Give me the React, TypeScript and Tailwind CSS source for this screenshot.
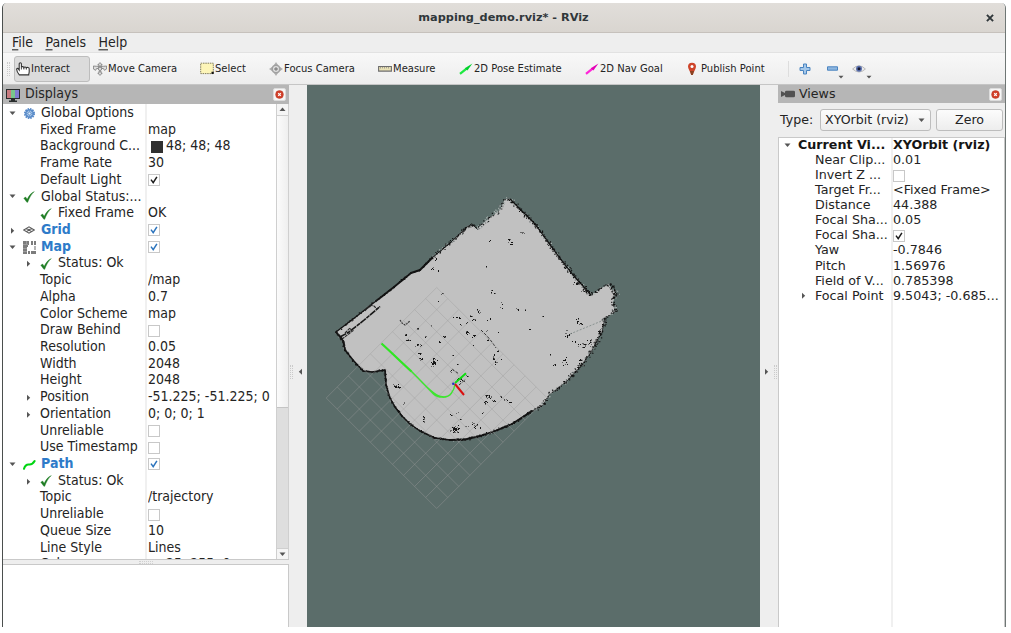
import React from "react";

type Pt = [number, number];

/* ---------- small glyphs ---------- */

const Tri = ({ dir }: { dir: "down" | "right" | "left" | "up" }) => {
  const d = {
    down: "M0.5 1.5h6l-3 3.6z",
    up: "M0.5 5h6l-3-3.6z",
    right: "M2 0.8v6l3.2-3z",
    left: "M5 0.8v6L1.8 3.8z",
  }[dir];
  return (
    <svg className="h-[7px] w-[7px] shrink-0" viewBox="0 0 7 7">
      <path d={d} fill="#555" />
    </svg>
  );
};

const GreenCheck = () => (
  <svg className="h-3 w-3 shrink-0" viewBox="0 0 12 12">
    <path d="M0.8 7.2L2.6 6l1.6 2.3C5.8 4.8 8 2 11.3.6 8.4 3.2 6.4 6.600 4.700 11.300H3.900z" fill="#1f7d24" stroke="#1f7d24" strokeWidth=".4" />
  </svg>
);

const Gear = () => (
  <svg className="h-[13px] w-[13px] shrink-0" viewBox="0 0 13 13">
    <circle cx="6.500" cy="6.500" r="4.600" fill="#7ba4d6" stroke="#5b8cca" strokeWidth="1.900" strokeDasharray="1.500 .9" />
    <circle cx="6.500" cy="6.500" r="3.600" fill="#a3c1e5" stroke="#4a80c2" strokeWidth=".8" />
    <path d="M6.500 3v7M3 6.500h7M4 4l5 5M9 4l-5 5" stroke="#4e84c4" strokeWidth=".6" />
    <circle cx="6.500" cy="6.500" r="1.100" fill="#e6effa" />
  </svg>
);

const GridIcon = () => (
  <svg className="h-[12px] w-[12px] shrink-0" viewBox="0 0 12 12">
    <path d="M.8 6L6 2.900 11.200 6 6 9.100zM3.400 4.300l5.200 3.400M8.600 4.300L3.400 7.700" fill="none" stroke="#5c5c5c" strokeWidth="1.100" />
  </svg>
);

const MapIcon = () => (
  <svg className="h-[13px] w-[13px] shrink-0" viewBox="0 0 13 13" shapeRendering="crispEdges">
    <path d="M0 0h6v4H5v2H4v7H0z" fill="#7c7c7c" />
    <path d="M0 3.500h5M3.500 0v4M0 7.500h4M0 10.500h4" stroke="#9b9b9b" strokeWidth="1" />
    <path d="M8 0h2v4H8zM11 0h2v4h-2zM5 10h2v3H5zM8 10h5v3H8z" fill="#7c7c7c" />
    <path d="M11 5h2v4h-2z" fill="#b4b4b4" />
  </svg>
);

const PathIcon = () => (
  <svg className="h-[13px] w-[13px] shrink-0" viewBox="0 0 13 13">
    <path d="M1 10.800C2 7.500 4 6.300 6 6.500s4-.6 5.600-3.400" fill="none" stroke="#00d512" strokeWidth="2.100" strokeLinecap="round" />
  </svg>
);

const CloseBtn = () => (
  <span className="flex h-[13px] w-[13px] items-center justify-center rounded-[2px] border border-[#dcdcdc] bg-[#f6f6f6]">
    <svg className="h-[9px] w-[9px] shrink-0" viewBox="0 0 9 9">
      <circle cx="4.500" cy="4.500" r="3.900" fill="#d2402a" stroke="#b83a28" strokeWidth=".5" />
      <path d="M3.200 3.200l2.600 2.600M5.800 3.200L3.200 5.800" stroke="#fff" strokeWidth="1.200" />
    </svg>
  </span>
);

const Box = ({ on, blue }: { on?: boolean; blue?: boolean }) => (
  <span className="flex h-3 w-3 shrink-0 items-center justify-center border border-[#c8c8c8] bg-white">
    {on && (
      <svg className="h-2 w-2" viewBox="0 0 8 8">
        <path d="M1 3.600l2.200 3L6.900.8" fill="none" stroke={blue ? "#2c74bd" : "#1c1c1c"} strokeWidth="1.500" />
      </svg>
    )}
  </span>
);

/* ---------- property trees ---------- */

type Row = {
  label: string;
  lv: number;
  arrow?: "down" | "right";
  icon?: React.ReactNode;
  value?: string;
  check?: boolean;
  blue?: boolean;
  swatch?: string;
};

const displays: Row[] = [
  { label: "Global Options", lv: 0, arrow: "down", icon: <Gear /> },
  { label: "Fixed Frame", lv: 1, value: "map" },
  { label: "Background C...", lv: 1, value: "48; 48; 48", swatch: "dark" },
  { label: "Frame Rate", lv: 1, value: "30" },
  { label: "Default Light", lv: 1, check: true },
  { label: "Global Status:...", lv: 0, arrow: "down", icon: <GreenCheck /> },
  { label: "Fixed Frame", lv: 1, icon: <GreenCheck />, value: "OK" },
  { label: "Grid", lv: 0, arrow: "right", icon: <GridIcon />, check: true, blue: true },
  { label: "Map", lv: 0, arrow: "down", icon: <MapIcon />, check: true, blue: true },
  { label: "Status: Ok", lv: 1, arrow: "right", icon: <GreenCheck /> },
  { label: "Topic", lv: 1, value: "/map" },
  { label: "Alpha", lv: 1, value: "0.7" },
  { label: "Color Scheme", lv: 1, value: "map" },
  { label: "Draw Behind", lv: 1, check: false },
  { label: "Resolution", lv: 1, value: "0.05" },
  { label: "Width", lv: 1, value: "2048" },
  { label: "Height", lv: 1, value: "2048" },
  { label: "Position", lv: 1, arrow: "right", value: "-51.225; -51.225; 0" },
  { label: "Orientation", lv: 1, arrow: "right", value: "0; 0; 0; 1" },
  { label: "Unreliable", lv: 1, check: false },
  { label: "Use Timestamp", lv: 1, check: false },
  { label: "Path", lv: 0, arrow: "down", icon: <PathIcon />, check: true, blue: true },
  { label: "Status: Ok", lv: 1, arrow: "right", icon: <GreenCheck /> },
  { label: "Topic", lv: 1, value: "/trajectory" },
  { label: "Unreliable", lv: 1, check: false },
  { label: "Queue Size", lv: 1, value: "10" },
  { label: "Line Style", lv: 1, value: "Lines" },
  { label: "Color", lv: 1, value: "25; 255; 0", swatch: "green" },
];

const DisplayRow = ({ r }: { r: Row }) => (
  <div className="flex h-[16.73px] shrink-0 items-center whitespace-nowrap">
    <div className="flex h-full w-[145px] shrink-0 items-center overflow-hidden">
      <span className={r.lv === 0 ? "flex w-[20px] shrink-0 pl-[6px]" : "flex w-[37px] shrink-0 pl-[22px]"}>
        {r.arrow && <Tri dir={r.arrow} />}
      </span>
      {r.icon && <span className="flex w-[18px] shrink-0">{r.icon}</span>}
      <span className={r.blue ? "inline-block scale-y-[1.07] font-bold text-[#2e7bc9]" : "inline-block scale-y-[1.07]"}>{r.label}</span>
    </div>
    {r.swatch && <span className={r.swatch === "dark" ? "mx-[3px] h-3 w-3 bg-[#303030]" : "mx-[3px] h-3 w-3 border border-[#333] bg-[#19ff00]"} />}
    {r.value && <span className="inline-block scale-y-[1.07]">{r.value}</span>}
    {r.check !== undefined && <Box on={r.check} blue={r.blue} />}
  </div>
);

const views: Row[] = [
  { label: "Near Clip...", lv: 1, value: "0.01" },
  { label: "Invert Z ...", lv: 1, check: false },
  { label: "Target Fr...", lv: 1, value: "<Fixed Frame>" },
  { label: "Distance", lv: 1, value: "44.388" },
  { label: "Focal Sha...", lv: 1, value: "0.05" },
  { label: "Focal Sha...", lv: 1, check: true },
  { label: "Yaw", lv: 1, value: "-0.7846" },
  { label: "Pitch", lv: 1, value: "1.56976" },
  { label: "Field of V...", lv: 1, value: "0.785398" },
  { label: "Focal Point", lv: 1, arrow: "right", value: "9.5043; -0.685..." },
];

/* ---------- occupancy map ---------- */

const outline: Pt[] = [
  [336, 332], [357, 316], [376, 301], [394, 287], [411, 273], [420, 270], [432, 258], [450, 243], [467, 227], [473, 225],
  [477, 229], [488, 219], [500, 210], [505, 199], [510, 199], [535, 224], [556, 253], [573, 275], [591, 295],
  [608, 284], [616, 293], [613, 302], [615, 312], [605, 318], [602, 332], [597, 341], [590, 354], [580, 367],
  [567, 381], [549, 395], [543, 405], [532, 411], [512, 424], [495, 431], [480, 436], [465, 439.500], [450, 440],
  [435, 438], [420, 431], [410, 424], [402, 416], [395, 407], [390, 398], [386, 385], [385, 370], [372, 372],
  [363, 371], [353, 360], [345, 350], [343, 341],
];

/* per-segment edge look: density of specks, spread, solid line width */
const edgeStyle = (i: number): [number, number, number] => {
  if (i < 2) return [1.1, 1.1, 1.3];
  if (i < 6) return [1.3, 0.8, 1.9];
  if (i < 8) return [1.8, 1.5, 1];
  if (i < 10) return [1.6, 1.2, 0.8];
  if (i < 14) return [1.7, 2, 0];
  if (i < 18) return [2.2, 1.8, 1.2];
  if (i < 19) return [1.4, 1, 0];
  if (i < 22) return [3.2, 2.4, 0];
  if (i < 23) return [1.1, 0.8, 0];
  if (i < 28) return [2.2, 1.9, 0.7];
  if (i < 31) return [2, 1.6, 0.4];
  if (i < 36) return [2, 1.1, 1.8];
  return [1.5, 0.9, 1.5];
};

const makeRandom = (seed: number) => () => {
  seed = (seed * 1664525 + 1013904223) % 4294967296;
  return seed / 4294967296;
};

const edges = (() => {
  const rnd = makeRandom(77);
  const out = { black: "", grey: "", light: "", solids: [] as { d: string; w: number }[] };
  outline.forEach((a, i) => {
    const b = outline[(i + 1) % outline.length];
    const len = Math.hypot(b[0] - a[0], b[1] - a[1]);
    const [density, spread, w] = edgeStyle(i);
    if (w) out.solids.push({ d: `M${a[0]} ${a[1]}L${b[0]} ${b[1]}`, w });
    const nx = -(b[1] - a[1]) / len;
    const ny = (b[0] - a[0]) / len;
    const soft = i >= 10 && i < 14;
    for (let k = 0; k < len * density; k++) {
      const t = rnd();
      const o = (rnd() + rnd() - 1) * spread * 1.5;
      const x = (a[0] + (b[0] - a[0]) * t + nx * o - 0.5).toFixed(1);
      const y = (a[1] + (b[1] - a[1]) * t + ny * o - 0.5).toFixed(1);
      const cell = `M${x} ${y}h1.100v1.100h-1.100z`;
      const c = rnd();
      if (c < (soft ? 0.25 : 0.58)) out.black += cell;
      else if (c < (soft ? 0.55 : 0.78)) out.grey += cell;
      else out.light += cell;
    }
  });
  return out;
})();

/* obstacle clusters: x, y, radius x, radius y, cell count */
const clusters: [number, number, number, number, number][] = [
  [433, 269, 2, 1, 5], [438, 271, 1, 1, 3], [436, 259, 2, 2, 5], [442, 294, 2, 1, 3], [439, 301, 1, 1, 1],
  [406, 335, 1, 1, 5], [409, 340, 2, 1, 8], [418, 329, 1, 1, 4], [426, 337, 1, 1, 3], [418, 345, 2, 1, 5],
  [421, 346, 1, 1, 3], [432, 326, 1, 1, 3], [445, 337, 2, 2, 8], [440, 342, 1, 1, 3], [458, 318, 4, 1, 6],
  [461, 325, 1, 1, 2], [467, 323, 1, 1, 4], [472, 316, 2, 1, 4], [478, 311, 1, 2, 6], [475, 320, 2, 1, 5],
  [468, 333, 2, 3, 9], [474, 336, 2, 2, 8], [487, 331, 1, 1, 2], [473, 346, 1, 1, 2], [488, 340, 1, 1, 4],
  [523, 233, 4, 1, 6], [509, 241, 2, 2, 7], [511, 245, 1, 1, 3], [512, 242, 1, 1, 3], [490, 241, 1, 1, 2],
  [487, 267, 1, 1, 2], [492, 292, 1, 2, 5], [495, 293, 1, 1, 2], [502, 304, 1, 1, 2], [501, 308, 1, 1, 2],
  [517, 309, 2, 1, 5], [526, 310, 1, 1, 2], [543, 316, 1, 1, 3], [480, 313, 1, 1, 2], [487, 321, 2, 1, 3],
  [490, 319, 1, 1, 2], [531, 329, 1, 1, 4], [499, 332, 1, 1, 1], [578, 321, 2, 3, 9], [581, 324, 3, 1, 6],
  [568, 334, 3, 4, 14], [574, 342, 2, 1, 5], [582, 345, 4, 3, 13], [589, 343, 5, 4, 16], [600, 333, 2, 4, 16],
  [577, 284, 4, 2, 8], [584, 289, 3, 3, 8], [396, 386, 3, 2, 14], [399, 387, 2, 1, 5],
  [404, 403, 1, 1, 3], [424, 419, 1, 3, 9], [434, 363, 3, 4, 34], [433, 364, 1, 1, 9], [422, 359, 2, 2, 6],
  [420, 354, 2, 1, 5], [453, 356, 1, 1, 4], [458, 364, 1, 1, 2], [461, 379, 3, 2, 8],
  [452, 371, 2, 1, 6], [463, 380, 2, 2, 6], [468, 376, 2, 1, 4], [452, 415, 2, 1, 4], [457, 413, 1, 1, 2],
  [455, 429, 4, 4, 38], [455, 429, 2, 2, 14], [461, 419, 1, 1, 2], [475, 425, 3, 3, 14], [481, 428, 1, 1, 4],
  [467, 427, 2, 1, 4], [488, 397, 3, 2, 18], [486, 402, 1, 3, 9], [494, 401, 2, 1, 7], [501, 397, 1, 1, 3],
  [506, 400, 2, 1, 4], [511, 402, 2, 1, 4], [483, 413, 1, 1, 3], [550, 355, 1, 1, 2], [555, 365, 3, 1, 5],
  [565, 361, 2, 4, 15], [580, 362, 2, 3, 10],
  [494, 358, 1, 3, 11], [496, 363, 1, 2, 5], [498, 352, 1, 1, 3], [501, 359, 1, 1, 1],
];

const specks = (() => {
  const rnd = makeRandom(19);
  let black = "";
  let grey = "";
  clusters.forEach(([cx, cy, rx, ry, n]) => {
    for (let k = 0; k < n; k++) {
      const x = Math.round(cx + (rnd() + rnd() - 1) * rx * 1.3 - 0.5);
      const y = Math.round(cy + (rnd() + rnd() - 1) * ry * 1.3 - 0.5);
      const c = `M${x} ${y}h1v1h-1z`;
      if (rnd() < 0.6) black += c;
      else grey += c;
    }
  });
  return { black, grey };
})();

const poly = "M" + outline.map((p) => p.join(" ")).join("L") + "Z";

const steps = [0, 1, 2, 3, 4, 5, 6, 7, 8, 9, 10];
const gridPath = steps
  .map((i) => {
    const k = i * 11.05;
    return `M${326.2 + k} ${398 - k}l110.500 110.500M${326.2 + k} ${398 + k}l110.500-110.500`;
  })
  .join("");

const Scene = () => (
  <svg className="block h-[542px] w-[453px] shrink-0 bg-[#5b6d6a]" viewBox="307 85 453 542">
    <path d={poly} fill="#c1c1c1" />
    <path d={edges.light} fill="#a9b1af" />
    <path d={edges.grey} fill="#62696a" />
    {edges.solids.map((s, i) => (
      <path key={i} d={s.d} stroke="#151515" strokeWidth={s.w} strokeLinecap="round" />
    ))}
    <path d={edges.black} fill="#101010" />
    <path d="M340 337l9-5 14-11 17-14.500" fill="none" stroke="#171717" strokeWidth="1.600" strokeDasharray="7 .8 4 .6" />
    <path d="M342 339l12-9M345 333l5-5 2 3M365 311l5-6 4 1 3 3" fill="none" stroke="#2a2a2a" strokeWidth="1.100" strokeDasharray="3 .8" />
    <path d="M336 332l5 5 3 5 1 7" fill="none" stroke="#171717" strokeWidth="1.500" strokeDasharray="3 .6" />
    <path d={specks.grey} fill="#666" />
    <path d={specks.black} fill="#161616" />
    <path d="M400 320l2 3 3 2 5-4" fill="none" stroke="#333" strokeWidth="1.100" strokeDasharray="2 .8" />
    <path d="M481 330l6 6 5 6 4 6" fill="none" stroke="#333" strokeWidth="1" strokeDasharray="3 1.500" />
    <path d="M452 369l7 5M459 385l7-6" fill="none" stroke="#333" strokeWidth="1" strokeDasharray="3 1.500" />
    <path d="M570 334l34-14" stroke="#8a9391" strokeWidth="1" strokeDasharray="2 1.500" />
    <path d={gridPath} fill="none" stroke="#9c9c9c" strokeOpacity=".45" strokeWidth=".9" />
    <path d="M381.500 343.500C392 353 402 363 411.500 371.500" fill="none" stroke="#2fe622" strokeWidth="2.300" />
    <path d="M411 371l10 10 12.500 13c4 3.800 14 5 18-1 2.500-3 3-5 3.500-9M411 371c5 4 15 17 23 22 4 3 9 4 11 4" fill="none" stroke="#3de52f" strokeWidth="1.400" />
    <path d="M455 383l11-9.700" stroke="#0ddc10" strokeWidth="2" />
    <path d="M455 384l9 11" stroke="#d90f0f" strokeWidth="2" />
    <circle cx="453.300" cy="383.700" r="1.300" fill="#2635bf" />
  </svg>
);

/* ---------- toolbar icons ---------- */

const Hand = () => (
  <svg className="h-[14px] w-[14px] shrink-0" viewBox="0 0 14 14">
    <path d="M3.300 12.900C1.900 11.400.9 9.600.6 7.300c.1-1.200 1.300-1.200 2-.2l.6.9V1.700C3.200.4 5.400.4 5.400 1.700v3.500c.3-.9 2.300-.8 2.500.3.4-.8 2.200-.6 2.400.3.5-.7 2.900-.6 2.900.9v3.100c0 1.100-.5 1.900-.5 3.100z" fill="#fff" stroke="#333" strokeWidth="1.100" />
    <path d="M5.400 5v2.500M7.900 5.300v2.200M10.300 5.600v2" stroke="#333" strokeWidth=".9" />
  </svg>
);
const MoveCam = () => (
  <svg className="h-[14px] w-[14px] shrink-0" viewBox="0 0 14 14">
    <g fill="#ddd" stroke="#777" strokeWidth=".8">
      <path d="M7 .6l2.200 2.300H8v2H6v-2H4.800zM7 13.400l2.200-2.300H8v-2H6v2H4.800zM.4 4l3.200.3h2v2.200h-2L2.600 8.300.4 7zM13.600 4l-3.200.3h-2v2.200h2l1 1.800L13.600 7z" />
      <circle cx="7" cy="6.800" r="1.700" />
    </g>
  </svg>
);
const SelectIcon = () => (
  <svg className="h-[13px] w-[14px] shrink-0" viewBox="0 0 14 13">
    <path d="M.7 1.200h12.600v10.400H.7z" fill="#fdf5b8" stroke="#77724e" strokeWidth=".9" strokeDasharray="1.500 .8" />
    <path d="M11.500 9.800h2.200V12h-2.200z" fill="#111" />
  </svg>
);
const Focus = () => (
  <svg className="h-[14px] w-[14px] shrink-0" viewBox="0 0 14 14">
    <path d="M7 0l2 3H5zM7 14l2-3H5zM0 7l3-2v4zM14 7l-3-2v4z" fill="#b0b0b0" />
    <circle cx="7" cy="7" r="3.800" fill="#dedede" stroke="#a0a0a0" strokeWidth="1.600" />
    <path d="M7 5.200v3.600M5.200 7h3.600" stroke="#858585" strokeWidth="1.400" />
  </svg>
);
const Ruler = () => (
  <svg className="h-[8px] w-[14px] shrink-0" viewBox="0 0 14 8">
    <path d="M.6 1.500h12.800v4.600H.6z" fill="#e9e1b5" stroke="#6d6d6d" strokeWidth="1.100" />
    <path d="M2.500 2v1.500M4.500 2v1.300M6.500 2v1.500M8.500 2v1.300M10.500 2v1.500" stroke="#777" strokeWidth=".6" />
  </svg>
);
const Arrow = ({ pink }: { pink?: boolean }) => (
  <svg className="h-[12px] w-[14px] shrink-0" viewBox="0 0 14 12">
    <path d="M1 10.800L7.500 5.600" stroke={pink ? "#ff25d8" : "#1de940"} strokeWidth="2.300" />
    <path d="M5.800 5.200L13.400.6 8.400 7.600z" fill={pink ? "#e300b6" : "#00cf2c"} />
  </svg>
);
const Pin = () => (
  <svg className="h-[14px] w-[10px] shrink-0" viewBox="0 0 10 14">
    <path d="M5 .8a4 4 0 00-4 4C1 7.200 3.800 10 4.200 13h1.600C6.200 10 9 7.200 9 4.800a4 4 0 00-4-4z" fill="#ce442a" />
    <path d="M2.900 9h4.200L5.800 13H4.200z" fill="#8a4222" />
    <circle cx="5" cy="4.600" r="1.500" fill="#fff" />
  </svg>
);

const Tool = ({ w, icon, children }: { w: string; icon: React.ReactNode; children: React.ReactNode }) => (
  <div className={`flex shrink-0 items-center ${w}`}>
    {icon}
    <span className="ml-[1px] inline-block scale-y-[1.05] whitespace-nowrap">{children}</span>
  </div>
);

const DropMark = () => (
  <svg className="h-[4px] w-[6px]" viewBox="0 0 6 4">
    <path d="M.5.8h5l-2.500 2.600z" fill="#555" />
  </svg>
);

const Dots = () => <span className="h-[14px] w-[3px] shrink-0 border-x border-dotted border-[#cacaca]" />;

export default function App() {
  return (
    <div className="flex h-[633px] w-[1011px] flex-col overflow-hidden bg-white pl-[2px] pt-[3px] font-['DejaVu_Sans',sans-serif] text-[12.6px] leading-none text-[#242424]">
      <div className="flex h-[624px] w-[1004px] flex-col overflow-hidden rounded-t-[5px] border-x border-l-[#4b4f4e] border-r-[#6f7775] bg-[#eee]">
        {/* title bar */}
        <div className="flex h-[30px] shrink-0 items-center border-b border-[#c6c1bc] bg-linear-to-b from-[#e1deda] to-[#d9d5d0]">
          <div className="w-[18px]" />
          <div className="flex-1 pt-[1px] text-center text-[11.3px] font-bold text-[#30373a]">mapping_demo.rviz* - RViz</div>
          <svg className="mr-[11px] h-[8px] w-[8px]" viewBox="0 0 7 7">
            <path d="M.8.8l5.400 5.400M6.200.8L.8 6.200" stroke="#30373a" strokeWidth="1.700" />
          </svg>
        </div>
        {/* menu */}
        <div className="flex h-[20px] shrink-0 items-center border-b border-[#e2e2e2] pl-[9px] pt-[1px]">
          <span className="inline-block w-[33.500px] scale-y-[1.05]"><u className="underline-offset-2">F</u>ile</span>
          <span className="inline-block w-[53px] scale-y-[1.05]"><u className="underline-offset-2">P</u>anels</span>
          <span className="inline-block scale-y-[1.05]"><u className="underline-offset-2">H</u>elp</span>
        </div>
        {/* toolbar */}
        <div className="flex h-[32px] shrink-0 items-center border-b border-[#c5c5c5] bg-linear-to-b from-[#f8f8f8] to-[#ededed] text-[10px]">
          <span className="flex w-[11px] justify-center"><Dots /></span>
          <div className="mr-[3px] flex h-[26px] w-[76px] shrink-0 items-center rounded-[3px] border border-[#bdbdbd] bg-[#dcdcdc] pl-[1px]">
            <Hand />
            <span className="ml-[1px] inline-block scale-y-[1.05]">Interact</span>
          </div>
          <Tool w="w-[107px]" icon={<MoveCam />}>Move Camera</Tool>
          <Tool w="w-[69px]" icon={<SelectIcon />}>Select</Tool>
          <Tool w="w-[109px]" icon={<Focus />}>Focus Camera</Tool>
          <Tool w="w-[81px]" icon={<Ruler />}>Measure</Tool>
          <Tool w="w-[126px]" icon={<Arrow />}>2D Pose Estimate</Tool>
          <Tool w="w-[102px]" icon={<Arrow pink />}>2D Nav Goal</Tool>
          <div className="flex w-[101px] shrink-0 items-center gap-[4px]">
            <Pin />
            <span className="inline-block scale-y-[1.05]">Publish Point</span>
          </div>
          <div className="mr-[10px] h-[16px] w-px bg-[#ddd]" />
          <svg className="mr-[16px] h-[12px] w-[12px] shrink-0" viewBox="0 0 12 12">
            <path d="M4.500 1h3v3.500H11v3H7.500V11h-3V7.500H1v-3h3.500z" fill="#a5c8ea" stroke="#4a84c0" strokeWidth="1" />
          </svg>
          <svg className="h-[5px] w-[11px] shrink-0" viewBox="0 0 11 5">
            <path d="M.5.8h10v3.400H.5z" fill="#8fb7e0" stroke="#4a84c0" strokeWidth="1" />
          </svg>
          <span className="mr-[8px] mt-[17px]"><DropMark /></span>
          <svg className="h-[10px] w-[14px] shrink-0" viewBox="0 0 14 10">
            <path d="M.6 5Q7-1.500 13.400 5 7 11 .6 5z" fill="#eee" stroke="#aaa" strokeWidth=".8" />
            <circle cx="7" cy="4.800" r="3" fill="#596fae" />
            <circle cx="7" cy="4.800" r="1.500" fill="#15182e" />
          </svg>
          <span className="mt-[17px]"><DropMark /></span>
        </div>

        {/* panels */}
        <div className="flex h-[542px] shrink-0">
          <div className="flex w-[286px] shrink-0 flex-col">
            <div className="flex h-[19px] shrink-0 items-center bg-[#b6b6b6] pl-[3px] pr-[3px]">
              <svg className="mr-[5px] h-[14px] w-[14px] shrink-0" viewBox="0 0 14 14">
                <path d="M0 1h14v10H0z" fill="#282c2c" />
                <path d="M1 2h4v8H1z" fill="#c87b80" />
                <path d="M5 2h4v8H5z" fill="#79c58b" />
                <path d="M9 2h4v8H9z" fill="#817bd0" />
                <path d="M5 11h4v1.500h2V14H3v-1.500h2z" fill="#282c2c" />
              </svg>
              <span className="inline-block flex-1 scale-y-[1.07]">Displays</span>
              <CloseBtn />
            </div>
            <div className="flex h-[456px] shrink-0 overflow-hidden border-b border-[#c9c9c9] bg-white">
              <div className="relative w-[273px] shrink-0 overflow-hidden">
                <div className="absolute bottom-0 left-[142px] top-0 w-[2px] bg-[#f0f0f0]" />
                <div className="relative pt-[0.9px]">
                  {displays.map((r, i) => (
                    <DisplayRow key={i} r={r} />
                  ))}
                </div>
              </div>
              <div className="flex w-[13px] shrink-0 flex-col border-x border-[#cfcfcf] bg-[#dedede]">
                <div className="flex h-[12px] items-center justify-center border-b border-[#cfcfcf] bg-[#f5f5f5]"><Tri dir="up" /></div>
                <div className="h-[292px] border-b border-[#c4c4c4] bg-linear-to-r from-[#fbfbfb] to-[#efefef]" />
                <div className="flex-1" />
                <div className="flex h-[11px] items-center justify-center border-t border-[#cfcfcf] bg-[#f5f5f5]"><Tri dir="down" /></div>
              </div>
            </div>
            <div className="flex h-[4px] shrink-0 items-center justify-center"><span className="h-[3px] w-[14px] border-y border-dotted border-[#d0d0d0]" /></div>
            <div className="flex-1 border-r border-t border-[#c9c9c9] bg-white" />
          </div>
          <div className="flex w-[18px] shrink-0 items-center justify-between pl-[1px] pr-[3px] pt-[31px]">
            <Dots />
            <Tri dir="left" />
          </div>
          <Scene />
          <div className="flex w-[18px] shrink-0 items-center justify-between pl-[3px] pr-[1px] pt-[31px]">
            <Tri dir="right" />
            <Dots />
          </div>
          <div className="flex min-w-0 flex-1 flex-col">
            <div className="flex h-[18px] shrink-0 items-center bg-[#b6b6b6] pl-[3px] pr-[3px]">
              <svg className="mr-[4px] h-[8px] w-[14px] shrink-0" viewBox="0 0 14 8">
                <path d="M0 1l4 2V2q0-1.300 1.500-1.300h7Q14 .7 14 2v4q0 1.300-1.500 1.300h-7Q4 7.300 4 6V5L0 7z" fill="#515151" />
              </svg>
              <span className="flex-1">Views</span>
              <CloseBtn />
            </div>
            <div className="flex h-[34px] shrink-0 items-center pl-[2px]">
              <span className="w-[40px] shrink-0">Type:</span>
              <div className="flex h-[22px] w-[111px] shrink-0 items-center justify-between rounded-[3px] border border-[#bdbdbd] bg-linear-to-b from-[#fcfcfc] to-[#ededed] pl-[4px] pr-[5px]">
                <span className="whitespace-nowrap">XYOrbit (rviz)</span>
                <Tri dir="down" />
              </div>
              <div className="ml-[5px] flex h-[22px] w-[67px] shrink-0 items-center justify-center rounded-[3px] border border-[#bdbdbd] bg-linear-to-b from-[#fcfcfc] to-[#ededed]">Zero</div>
            </div>
            <div className="relative flex-1 border-x border-t border-[#c9c9c9] bg-white text-[12.7px]">
              <div className="absolute bottom-0 left-[112px] top-0 w-[2px] bg-[#f0f0f0]" />
              <div className="relative flex h-[15px] items-center whitespace-nowrap font-bold text-[#151515]">
                <span className="flex w-[19px] pl-[5px]"><Tri dir="down" /></span>
                <span className="w-[95px]">Current Vi...</span>
                <span>XYOrbit (rviz)</span>
              </div>
              {views.map((r, i) => (
                <div key={i} className="relative flex h-[15.060px] items-center whitespace-nowrap">
                  <span className="flex w-[36px] shrink-0 pl-[21px]">{r.arrow && <Tri dir={r.arrow} />}</span>
                  <span className="w-[78px] shrink-0">{r.label}</span>
                  {r.value && <span>{r.value}</span>}
                  {r.check !== undefined && <Box on={r.check} />}
                </div>
              ))}
            </div>
          </div>
        </div>
      </div>
    </div>
  );
}
